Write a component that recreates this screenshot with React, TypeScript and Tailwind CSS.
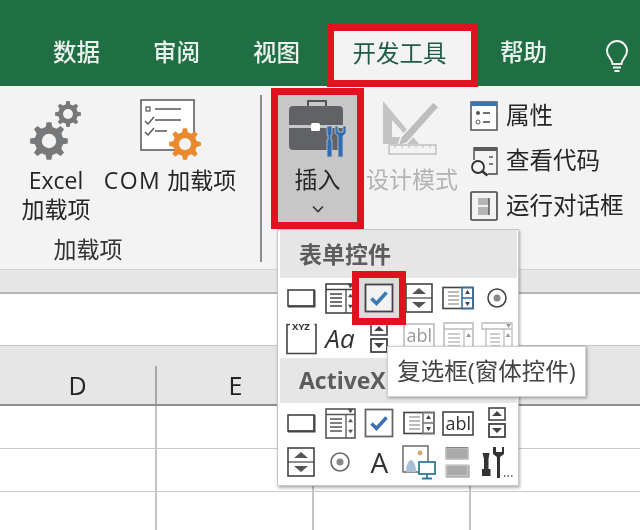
import React from 'react';

const gearPath = (cx: number, cy: number, r: number, teeth = 8) => {
  const pts: string[] = [];
  const inner = r * 0.76;
  const step = (Math.PI * 2) / teeth;
  for (let i = 0; i < teeth; i++) {
    const a = i * step - Math.PI / 2;
    const w = step * 0.2;
    const p = [
      [inner, a - w * 1.5],
      [r, a - w * 0.8],
      [r, a + w * 0.8],
      [inner, a + w * 1.5],
    ];
    p.forEach(([rad, an]) => pts.push(`${(cx + rad * Math.cos(an)).toFixed(2)} ${(cy + rad * Math.sin(an)).toFixed(2)}`));
  }
  return 'M' + pts.join('L') + 'Z';
};

const Gear = ({ cx, cy, r, fill }: { cx: number; cy: number; r: number; fill: string }) => (
  <g>
    <path d={gearPath(cx, cy, r)} fill={fill} />
    <circle cx={cx} cy={cy} r={r * 0.38} fill="#f3f3f3" />
  </g>
);

const Ico = ({ children, className = '' }: { children: React.ReactNode; className?: string }) => (
  <svg viewBox="0 0 36 36" width="36" height="36" fill="none" stroke="#444" strokeWidth="1.6" className={className}>
    {children}
  </svg>
);

const BtnIcon = () => (
  <Ico>
    <rect x="5" y="10" width="26" height="16" />
    <path d="M5 26.500h26.500V10" strokeWidth="2" />
  </Ico>
);

const ComboIcon = ({ c = '#444' }: { c?: string }) => (
  <Ico>
    <g stroke={c}>
      <rect x="4" y="4" width="29" height="29" />
      <path d="M4 9.500h29M24 9.500V33M8 14h12M8 18h12M8 22h12M8 26h12" strokeWidth="1.300" />
      <path d="M28.500 14l-2 3h4zM28.500 28l-2-3h4z" fill={c} strokeWidth="0.500" />
      <path d="M26 4l2.500 4 2.500-4z" fill={c} strokeWidth="0.500" />
    </g>
  </Ico>
);

const CheckIcon = ({ c = '#444', w = '#3b78b4', bg = '#f2f2f2' }: { c?: string; w?: string; bg?: string }) => (
  <Ico>
    <rect x="4.500" y="4.500" width="27" height="27" stroke={c} strokeWidth="1.800" fill={bg} />
    <path d="M10.500 18.500l5 5 10-11" stroke={w} strokeWidth="3.600" />
  </Ico>
);

const SpinIcon = () => (
  <Ico>
    <rect x="5" y="4" width="26" height="28" />
    <path d="M5 18h26" strokeWidth="1.200" />
    <path d="M18 8l7 6H11zM18 28l7-6H11z" fill="#555" stroke="none" />
  </Ico>
);

const ListIcon = ({ blue = '#3b6f9e' }: { blue?: string }) => (
  <Ico>
    <rect x="3" y="7.500" width="30" height="21" />
    <path d="M8 12h11M8 16h11M8 20h11M8 24h11" strokeWidth="1.200" stroke="#777" />
    <rect x="22" y="7.500" width="11" height="21" stroke={blue} />
    <path d="M22 18h11" stroke={blue} />
    <path d="M27.500 10l-2.500 4h5zM27.500 26l-2.500-4h5z" fill="#444" stroke="none" />
  </Ico>
);

const RadioIcon = ({ c = '#444' }: { c?: string }) => (
  <Ico>
    <circle cx="18" cy="18" r="9" stroke={c} />
    <circle cx="18" cy="18" r="3.500" fill="#888" stroke="none" />
  </Ico>
);

const GroupBoxIcon = () => (
  <Ico>
    <path d="M7 4.500H4v29h29V4.500h-1.500" />
    <text x="18" y="10" textAnchor="middle" fontSize="9.500" fontWeight="700" fill="#333" stroke="none" fontFamily="Open Sans, sans-serif">
      XYZ
    </text>
  </Ico>
);

const TwinSpinIcon = () => (
  <Ico>
    <rect x="10" y="3" width="16" height="12" />
    <rect x="10" y="19" width="16" height="13" strokeWidth="1.800" />
    <path d="M18 6l5 5H13zM18 28l5-5H13z" fill="#444" stroke="none" />
  </Ico>
);

const TextBoxIcon = ({ c = '#444', text = '#333', up = false }: { c?: string; text?: string; up?: boolean }) => (
  <Ico className={up ? '-mt-[6px]' : ''}>
    <rect x="3" y="7" width="30" height="23" stroke={c} />
    <text x="5.500" y="25" fontSize="18" fill={text} stroke="none" fontFamily="Open Sans, sans-serif">
      abl
    </text>
  </Ico>
);

const DimListIcon = () => (
  <Ico>
    <g stroke="#bdbdbd">
      <rect x="4" y="3" width="29" height="31" />
      <path d="M4 9h29M24 9v25M8 14h12M8 18h12M8 22h12M8 26h12" strokeWidth="1.300" />
      <path d="M28.500 13l-2.500 4h5z" fill="#999" stroke="none" />
    </g>
  </Ico>
);

const DimComboIcon = () => (
  <Ico>
    <g stroke="#bdbdbd">
      <path d="M3 3h30v6H3zM7 9v25h26V9M25 9v25M11 14h10M11 18h10M11 22h10M11 26h10" strokeWidth="1.300" />
      <path d="M29 13l-2.500 4h5z" fill="#999" stroke="none" />
      <path d="M27 4l2.500 4 2.500-4z" fill="#999" stroke="none" />
    </g>
  </Ico>
);

const ImageIcon = () => (
  <Ico>
    <rect x="2" y="2" width="25" height="26" strokeWidth="1.300" stroke="#555" />
    <circle cx="19" cy="9" r="2.400" fill="#e0a56e" stroke="none" />
    <path d="M5 28c0-8 3-12 5-12s5 4 5 12z" fill="#a9bfd8" stroke="none" />
    <rect x="18" y="18" width="16" height="12" fill="#fff" stroke="#2f7d9c" strokeWidth="1.800" />
    <path d="M26 30v4M21 34.500h10" stroke="#2f7d9c" strokeWidth="1.800" />
  </Ico>
);

const ToggleIcon = () => (
  <Ico>
    <rect x="6" y="4" width="22" height="11" fill="#aaa" stroke="#bbb" />
    <rect x="6" y="21" width="22" height="11" fill="#aaa" stroke="#ccc" />
    <path d="M6 3.500h22M29 21v12H6" stroke="#888" strokeWidth="1" />
  </Ico>
);

const MoreIcon = () => (
  <Ico>
    <path d="M7 2v6M3.500 9h7l-1 6v10h2v7H3v-7h2V15z" fill="#333" stroke="none" />
    <path d="M14 3v7l4 3v21h3V13l4-3V3l-2 0v5h-6V3z" fill="#333" stroke="none" />
    <path d="M25 32h1.500M28.500 32H30M32 32h1.500" strokeWidth="1.500" stroke="#555" />
  </Ico>
);

const GridRow = ({ last = false }: { last?: boolean }) => (
  <div className={`grid grid-cols-[157px_157px_157px_169px] ${last ? 'flex-1' : 'h-[43px] border-b border-[#c9c9c9]'}`}>
    <div className="border-r-2 border-[#c4c4c4]" />
    <div className="border-r-2 border-[#c4c4c4]" />
    <div className="border-r-2 border-[#c4c4c4]" />
    <div />
  </div>
);

const Tab = ({ label, className = '' }: { label: string; className?: string }) => (
  <span className={`text-[23.5px] leading-none font-medium text-[#e9f2ec] mb-[22px] ${className}`}>{label}</span>
);

const SmallBtn = ({ icon, label }: { icon: React.ReactNode; label: string }) => (
  <div className="flex items-center h-[45px] gap-[7px]">
    {icon}
    <span className="text-[23.5px] leading-none text-[#262626]">{label}</span>
  </div>
);

const MenuHeader = ({ label, h }: { label: string; h: string }) => (
  <div className={`${h} bg-[#e6e6e6] ml-[2px] flex items-center pl-[19px] text-[23px] font-bold text-[#5c5c5c]`}>{label}</div>
);

export default function App() {
  return (
    <div className="relative w-[640px] h-[530px] overflow-hidden bg-white flex flex-col font-['Open_Sans','Noto_Sans_CJK_SC',sans-serif] blur-[0.4px]">
      {/* title bar and tabs */}
      <div className="h-[86px] bg-[#206e43] flex items-end pl-[53px] shrink-0">
        <Tab label="数据" />
        <Tab label="审阅" className="ml-[53px]" />
        <Tab label="视图" className="ml-[53px]" />
        <div className="ml-[27px] w-[151px] h-[63px] border-[7px] border-[#e3111f] bg-[#f3f3f3] flex items-center justify-center pb-[4px] pr-[6px] text-[23.5px] text-[#1f5b46] -mb-px z-10">
          开发工具
        </div>
        <Tab label="帮助" className="ml-[22px]" />
        <svg viewBox="0 0 24 34" width="24" height="34" fill="none" stroke="#f1f5f2" strokeWidth="2" className="ml-[58px] mb-[12px]">
          <path d="M7.500 24c0-5-5.500-7-5.500-13a10 10 0 0 1 20 0c0 6-5.500 8-5.500 13z" />
          <path d="M8 27.500h8M9.500 31h5" />
        </svg>
      </div>

      {/* ribbon */}
      <div className="h-[184px] bg-[#f3f3f3] flex shrink-0 border-b border-[#d4d4d4] text-[#262626]">
        <div className="w-[260px] flex flex-col">
          <div className="flex h-[143px] pt-[9px]">
            <div className="w-[112px] flex flex-col items-center text-[23px] leading-[29px]">
              <svg width="70" height="66" viewBox="0 0 70 66" className="mb-[5px] ml-[2px]">
                <Gear cx={27} cy={46} r={19} fill="#77787a" />
                <Gear cx={46} cy={19} r={13} fill="#77787a" />
              </svg>
              <span>Excel</span>
              <span>加载项</span>
            </div>
            <div className="w-[130px] -ml-[7px] flex flex-col items-center text-[23px] leading-[29px]">
              <svg width="70" height="66" viewBox="0 0 70 66" className="mb-[5px]">
                <rect x="6" y="5" width="53" height="50" fill="#fff" stroke="#555" strokeWidth="1.500" />
                <rect x="11" y="12" width="4" height="4" fill="none" stroke="#555" strokeWidth="1.200" />
                <path d="M20 14h26M20 25h26M20 36h12" stroke="#555" strokeWidth="1.400" />
                <path d="M10 26l3 3 6-7M10 37l3 3 6-7" fill="none" stroke="#555" strokeWidth="1.400" />
                <Gear cx={50} cy={49} r={16} fill="#e98a2f" />
              </svg>
              <span className="whitespace-nowrap">
                <span className="tracking-[1.5px]">COM</span> 加载项
              </span>
            </div>
          </div>
          <div className="w-[176px] text-center text-[23px] leading-none mt-[9px] text-[#333]">加载项</div>
        </div>
        <div className="w-[2px] h-[167px] mt-[9px] bg-[#8c8c8c]" />
        <div className="ml-[9px] mt-[2px] w-[93px] h-[141px] border-[7px] border-[#e3111f] bg-[#c7c7c7] flex flex-col items-center">
          <svg width="64" height="62" viewBox="0 0 64 62" className="mt-[1px]">
            <path d="M22 10V5h18v5" fill="none" stroke="#555" strokeWidth="2" />
            <path d="M3 14a4 4 0 0 1 4-4h46a4 4 0 0 1 4 4v15H3z" fill="#616266" />
            <path d="M3 32h54v18a4 4 0 0 1-4 4H7a4 4 0 0 1-4-4z" fill="#616266" />
            <rect x="25" y="27" width="9" height="8" rx="1.500" fill="#fff" />
            <path d="M41 30h5v9h-1v5h1v17h-5V44h1v-5h-1z" fill="#2f6db3" stroke="#c7c7c7" strokeWidth="0.800" />
            <path d="M49 30v7l3 3v21h5V40l3-3v-7h-3v6h-5v-6z" fill="#2f6db3" stroke="#c7c7c7" strokeWidth="0.800" />
          </svg>
          <span className="text-[23px] leading-none mt-[10px]">插入</span>
          <svg width="14" height="8" viewBox="0 0 14 8" fill="none" stroke="#333" strokeWidth="1.600" className="mt-[14px]">
            <path d="M2 1.500l5 5 5-5" />
          </svg>
        </div>
        <div className="w-[96px] flex flex-col items-center pt-[12px]">
          <svg width="66" height="60" viewBox="0 0 66 60" className="mr-[12px]">
            <path d="M10 3v43h36z" fill="#c3c3c3" />
            <path d="M19 22v17h15z" fill="#f3f3f3" />
            <path d="M60 4l6 5-32 36-9 3 3-9z" fill="#bdbdbd" stroke="#f3f3f3" strokeWidth="1.500" />
            <rect x="16" y="47" width="47" height="9" fill="#f3f3f3" stroke="#bdbdbd" strokeWidth="1.400" />
            <path d="M22 47v3M29 47v3M36 47v3M43 47v3M50 47v3M57 47v3" stroke="#bdbdbd" strokeWidth="1" />
          </svg>
          <span className="text-[23px] leading-none mt-[10px] text-[#b3b3b3] whitespace-nowrap">设计模式</span>
        </div>
        <div className="ml-[9px] pt-[7px] flex flex-col">
          <SmallBtn
            label="属性"
            icon={
              <svg width="30" height="32" viewBox="0 0 30 32">
                <rect x="2" y="2" width="26" height="28" fill="#fff" stroke="#444" strokeWidth="1.400" />
                <rect x="2" y="2" width="26" height="4" fill="#3a76b4" />
                <circle cx="9" cy="13" r="2" fill="#555" />
                <circle cx="9" cy="22" r="2" fill="none" stroke="#555" />
                <path d="M14 13h7M14 22h7" stroke="#444" strokeWidth="1.400" />
              </svg>
            }
          />
          <SmallBtn
            label="查看代码"
            icon={
              <svg width="30" height="32" viewBox="0 0 30 32" fill="none">
                <path d="M5 15V3h23v26h-9" stroke="#444" strokeWidth="1.400" />
                <rect x="5" y="2" width="23" height="4" fill="#5a5a5a" />
                <path d="M20 12h4M20 19h4" stroke="#555" strokeWidth="1.300" />
                <circle cx="9" cy="22" r="6" stroke="#333" strokeWidth="1.800" fill="#f3f3f3" />
                <path d="M13.500 26.500l5 4" stroke="#333" strokeWidth="2.600" />
              </svg>
            }
          />
          <SmallBtn
            label="运行对话框"
            icon={
              <svg width="30" height="32" viewBox="0 0 30 32">
                <rect x="2" y="2" width="26" height="28" rx="1" fill="#f3f3f3" stroke="#444" strokeWidth="1.600" />
                <rect x="9" y="8" width="11" height="7" fill="#b5b5b5" />
                <rect x="9" y="17" width="11" height="8" fill="#b5b5b5" />
                <path d="M20 8v17" stroke="#444" strokeWidth="1.300" />
              </svg>
            }
          />
        </div>
      </div>

      {/* band under the ribbon */}
      <div className="h-[24px] bg-[#e7e7e7] border-b-2 border-[#b5b5b5] shrink-0" />
      {/* formula bar */}
      <div className="h-[52px] bg-white border-b border-[#c4c4c4] shrink-0" />
      {/* column headers */}
      <div className="h-[60px] bg-[#e6e6e6] border-b-2 border-[#8f8f8f] grid grid-cols-[157px_157px_157px_169px] items-end shrink-0">
        <div className="h-[38px] border-r-2 border-[#a6a6a6] text-center text-[25px] leading-[38px] text-[#222]">D</div>
        <div className="h-[38px] border-r-2 border-[#a6a6a6] text-center text-[25px] leading-[38px] text-[#222] pl-[2px]">E</div>
        <div className="h-[38px] border-r-2 border-[#a6a6a6]" />
        <div />
      </div>
      {/* cells */}
      <div className="flex-1 flex flex-col">
        <GridRow />
        <GridRow />
        <GridRow last />
      </div>

      {/* insert dropdown */}
      <div className="absolute left-[277px] top-[229px] w-[242px] h-[257px] bg-white border border-[#c6c6c6] shadow-[1px_2px_3px_rgba(0,0,0,0.3)] pr-px">
        <MenuHeader label="表单控件" h="h-[48px]" />
        <div className="grid grid-cols-6 h-[40px] pl-[3px] place-items-center">
          <BtnIcon />
          <ComboIcon />
          <div className="relative w-9 h-9">
            <div className="absolute -left-[9px] -top-[9px] w-[54px] h-[54px] border-[7px] border-[#e3111f] bg-[#dcdcdc] flex items-center justify-center">
              <CheckIcon />
            </div>
          </div>
          <SpinIcon />
          <ListIcon />
          <RadioIcon />
        </div>
        <div className="grid grid-cols-6 h-[40px] pl-[3px] place-items-center overflow-hidden">
          <GroupBoxIcon />
          <span className="italic text-[26px] leading-none text-[#333]">Aa</span>
          <TwinSpinIcon />
          <TextBoxIcon c="#bdbdbd" text="#9a9a9a" up />
          <DimListIcon />
          <DimComboIcon />
        </div>
        <MenuHeader label="ActiveX" h="h-[45px]" />
        <div className="grid grid-cols-6 h-[39px] pl-[3px] place-items-center">
          <BtnIcon />
          <ComboIcon c="#555" />
          <CheckIcon c="#666" w="#3f6fb5" bg="#ffffff" />
          <ListIcon blue="#777" />
          <TextBoxIcon />
          <TwinSpinIcon />
        </div>
        <div className="grid grid-cols-6 h-[40px] pl-[3px] place-items-center">
          <SpinIcon />
          <RadioIcon c="#666" />
          <span className="text-[28px] leading-none text-[#333]">A</span>
          <ImageIcon />
          <ToggleIcon />
          <MoreIcon />
        </div>
      </div>

      {/* tooltip */}
      <div className="absolute left-[387px] top-[346px] w-[199px] h-[51px] bg-white border border-[#d0d0d0] shadow-[1px_1px_3px_rgba(0,0,0,0.35)] flex items-center justify-center text-[23.5px] leading-none text-[#444] whitespace-nowrap">
        复选框(窗体控件)
      </div>
    </div>
  );
}
